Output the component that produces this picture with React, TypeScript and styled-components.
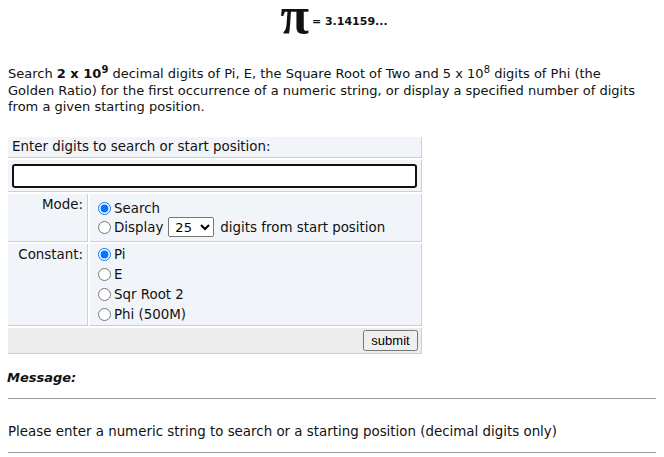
import { createGlobalStyle } from 'styled-components';
import styled from 'styled-components';

const GlobalStyle = createGlobalStyle`
  html, body {
    margin: 0;
    background: #ffffff;
  }
  body {
    padding: 0 8px;
    font-family: "DejaVu Sans", Verdana, sans-serif;
    color: #111;
  }
`;

const Header = styled.div`
  display: flex;
  justify-content: center;
  align-items: flex-start;
  padding: 10px 0 0 4px;
`;

const PiGlyph = styled.span`
  font-family: "Liberation Serif", "Times New Roman", serif;
  font-size: 52px;
  line-height: 12px;
  font-weight: bold;
`;

const PiValue = styled.span`
  font-size: 11px;
  line-height: 13px;
  font-weight: bold;
  margin: 5px 0 0 3px;
`;

const Intro = styled.p`
  font-size: 13px;
  line-height: 16.5px;
  margin: 38px 0 21px;
  white-space: nowrap;

  sup {
    font-size: 10px;
    line-height: 0;
  }
`;

const Form = styled.div`
  width: 414px;
  display: flex;
  flex-direction: column;
  gap: 2px;
  font-size: 13.4px;
`;

const Cell = styled.div<{ $grey?: boolean }>`
  background: ${({ $grey }) => ($grey ? '#ececec' : '#f1f5f9')};
  border-right: 1px solid #cfcfcf;
  border-bottom: 1px solid #cfcfcf;
`;

const Caption = styled(Cell)`
  padding: 2px 4px;
  height: 16px;
  line-height: 16px;
`;

const InputCell = styled(Cell)`
  padding: 4px 4px 3px;
`;

const TextInput = styled.input`
  display: block;
  box-sizing: border-box;
  width: 100%;
  height: 24px;
  border: 2px solid #111;
  border-radius: 3px;
  outline: none;
  background: #fff;
`;

const Row = styled.div`
  display: flex;
  gap: 2px;
`;

const LabelCell = styled(Cell)`
  width: 80px;
  flex: none;
  text-align: right;
  padding: 3px 4px 0 0;
  line-height: 16px;
  box-sizing: border-box;
`;

const ValueCell = styled(Cell)<{ $line: number; $top: number; $bottom: number }>`
  flex: 1;
  padding: ${({ $top, $bottom }) => `${$top}px 4px ${$bottom}px 3px`};
  display: flex;
  flex-direction: column;
  justify-content: center;

  label {
    height: ${({ $line }) => $line}px;
  }
`;

const Option = styled.label`
  display: flex;
  align-items: center;
`;

const Radio = styled.input`
  margin: 0 3px 0 5px;
  width: 13px;
  height: 13px;
`;

const DigitSelect = styled.select`
  margin: 0 6px 0 5px;
  width: 46px;
  height: 20px;
  font-size: 13px;
  font-family: "DejaVu Sans", sans-serif;
  padding: 0 0 0 2px;
`;

const SubmitCell = styled(Cell)`
  display: flex;
  justify-content: flex-end;
  padding: 2px 3px 2px;
`;

const SubmitButton = styled.button`
  font-family: "Liberation Sans", Arial, sans-serif;
  font-size: 13px;
  width: 55px;
  height: 21px;
  padding: 0;
`;

const MessageLabel = styled.div`
  font-weight: bold;
  font-style: italic;
  font-size: 13px;
  line-height: 16px;
  margin: 16px 0 0 -1px;
`;

const Rule = styled.hr`
  border: none;
  border-top: 1px solid #9a9a9a;
  margin: 12px 0 0;
`;

const MessageText = styled.p`
  font-size: 13.4px;
  line-height: 16px;
  margin: 25px 0 12px;
`;

export default function App() {
  return (
    <>
      <GlobalStyle />
      <Header>
        <PiGlyph>π</PiGlyph>
        <PiValue>= 3.14159...</PiValue>
      </Header>
      <Intro>
        Search <b>2 x 10<sup>9</sup></b> decimal digits of Pi, E, the Square Root of Two and 5 x 10
        <sup>8</sup> digits of Phi (the
        <br />
        Golden Ratio) for the first occurrence of a numeric string, or display a specified number of digits
        <br />
        from a given starting position.
      </Intro>
      <Form>
        <Caption>Enter digits to search or start position:</Caption>
        <InputCell>
          <TextInput type="text" autoFocus />
        </InputCell>
        <Row>
          <LabelCell>Mode:</LabelCell>
          <ValueCell $line={19} $top={5} $bottom={4}>
            <Option>
              <Radio type="radio" name="mode" defaultChecked />
              Search
            </Option>
            <Option>
              <Radio type="radio" name="mode" />
              Display
              <DigitSelect defaultValue="25">
                <option>10</option>
                <option>25</option>
                <option>50</option>
                <option>100</option>
              </DigitSelect>
              digits from start position
            </Option>
          </ValueCell>
        </Row>
        <Row>
          <LabelCell>Constant:</LabelCell>
          <ValueCell $line={20} $top={1} $bottom={0}>
            <Option>
              <Radio type="radio" name="constant" defaultChecked />
              Pi
            </Option>
            <Option>
              <Radio type="radio" name="constant" />
              E
            </Option>
            <Option>
              <Radio type="radio" name="constant" />
              Sqr Root 2
            </Option>
            <Option>
              <Radio type="radio" name="constant" />
              Phi (500M)
            </Option>
          </ValueCell>
        </Row>
        <SubmitCell $grey>
          <SubmitButton type="button">submit</SubmitButton>
        </SubmitCell>
      </Form>
      <MessageLabel>Message:</MessageLabel>
      <Rule />
      <MessageText>
        Please enter a numeric string to search or a starting position (decimal digits only)
      </MessageText>
      <Rule />
    </>
  );
}
